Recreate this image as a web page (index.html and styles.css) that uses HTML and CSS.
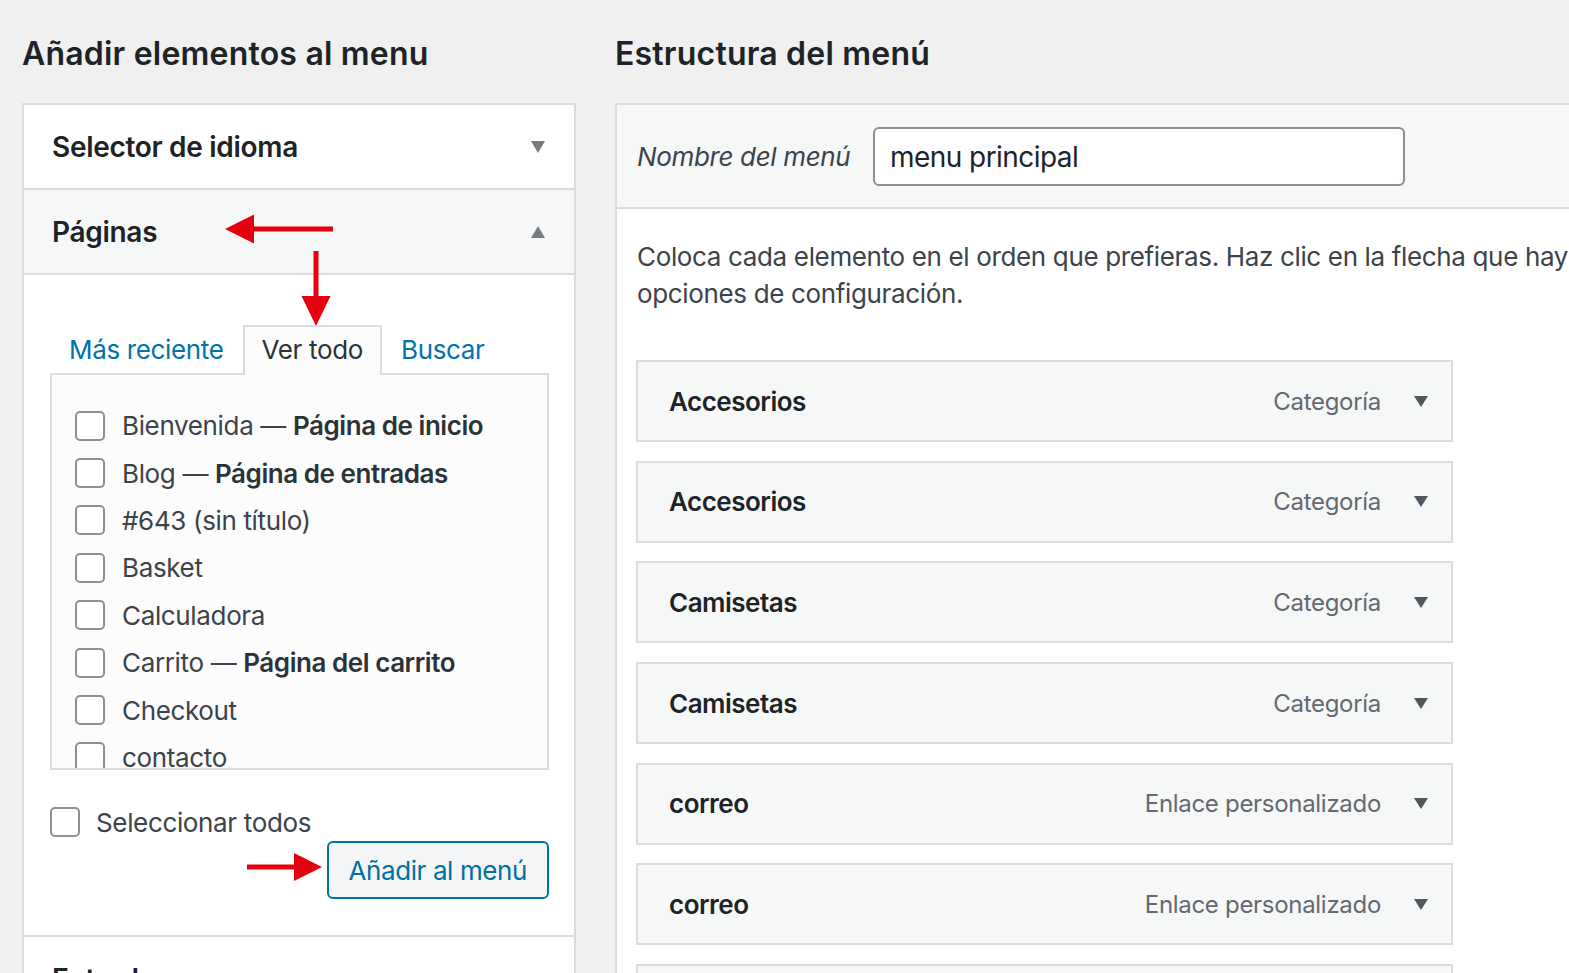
FILE: index.html
```html
<!DOCTYPE html>
<html lang="es">
<head>
<meta charset="utf-8">
<title>Menús</title>
<link rel="stylesheet" href="styles.css">
</head>
<body>
<div class="page">
  <section class="col col-left">
    <h2 class="col-title">Añadir elementos al menu</h2>
    <div class="accordion">
      <div class="acc-section">
        <h3 class="acc-title">Selector de idioma <span class="tri tri-down"></span></h3>
      </div>
      <div class="acc-section open">
        <h3 class="acc-title">Páginas <span class="tri tri-up"></span></h3>
        <div class="acc-content">
          <ul class="tabs">
            <li class="tab"><a class="tab-link">Más reciente</a></li>
            <li class="tab active">Ver todo</li>
            <li class="tab"><a class="tab-link">Buscar</a></li>
          </ul>
          <div class="tabs-panel">
            <ul class="checklist">
              <li><span class="cb"></span><span>Bienvenida — <b>Página de inicio</b></span></li>
              <li><span class="cb"></span><span>Blog — <b>Página de entradas</b></span></li>
              <li><span class="cb"></span><span>#643 (sin título)</span></li>
              <li><span class="cb"></span><span>Basket</span></li>
              <li><span class="cb"></span><span>Calculadora</span></li>
              <li><span class="cb"></span><span>Carrito — <b>Página del carrito</b></span></li>
              <li><span class="cb"></span><span>Checkout</span></li>
              <li><span class="cb"></span><span>contacto</span></li>
            </ul>
          </div>
          <label class="select-all"><span class="cb"></span><span>Seleccionar todos</span></label>
          <div class="actions"><button class="btn" type="button">Añadir al menú</button></div>
        </div>
      </div>
      <div class="acc-section">
        <h3 class="acc-title">Entradas <span class="tri tri-down"></span></h3>
      </div>
    </div>
  </section>

  <section class="col col-right">
    <h2 class="col-title">Estructura del menú</h2>
    <div class="menu-panel">
      <div class="menu-header">
        <label class="menu-name-label">Nombre del menú</label>
        <div class="menu-name-input">menu principal</div>
      </div>
      <div class="menu-body">
        <p class="instructions">Coloca cada elemento en el orden que prefieras. Haz clic en la flecha que hay a la derecha del elemento para mostrar más<br>opciones de configuración.</p>
        <ul class="menu-list">
          <li class="menu-item"><span class="item-title">Accesorios</span><span class="item-type">Categoría</span><span class="tri tri-item"></span></li>
          <li class="menu-item"><span class="item-title">Accesorios</span><span class="item-type">Categoría</span><span class="tri tri-item"></span></li>
          <li class="menu-item"><span class="item-title">Camisetas</span><span class="item-type">Categoría</span><span class="tri tri-item"></span></li>
          <li class="menu-item"><span class="item-title">Camisetas</span><span class="item-type">Categoría</span><span class="tri tri-item"></span></li>
          <li class="menu-item"><span class="item-title">correo</span><span class="item-type">Enlace personalizado</span><span class="tri tri-item"></span></li>
          <li class="menu-item"><span class="item-title">correo</span><span class="item-type">Enlace personalizado</span><span class="tri tri-item"></span></li>
          <li class="menu-item"><span class="item-title">Inicio</span><span class="item-type">Página</span><span class="tri tri-item"></span></li>
        </ul>
      </div>
    </div>
  </section>
</div>

<svg class="annotations" width="1569" height="973" viewBox="0 0 1569 973" aria-hidden="true">
  <g fill="#e5000f" stroke="none">
    <rect x="250" y="226.5" width="83" height="5"/>
    <polygon points="225,229 254,214.5 254,243.5"/>
    <rect x="313.5" y="251" width="5" height="48"/>
    <polygon points="316,326 301.5,296 330.5,296"/>
    <rect x="247" y="864.5" width="50" height="5"/>
    <polygon points="322,867 294,853 294,881"/>
  </g>
</svg>
</body>
</html>
```

FILE: styles.css
```css
* { box-sizing: border-box; }

html, body {
  margin: 0;
  padding: 0;
}

body {
  position: relative;
  width: 1569px;
  height: 973px;
  overflow: hidden;
  background: #f0f0f1;
  font-family: Inter, "Noto Sans", sans-serif;
  color: #3c434a;
  letter-spacing: -0.35px;
}

.page {
  display: flex;
  gap: 39px;
  padding: 34px 0 0 22px;
}

.col-left { width: 554px; flex: none; }
.col-right { width: 2100px; flex: none; }

.col-title {
  margin: 0 0 29px;
  font-size: 32px;
  line-height: 40px;
  font-weight: 600;
  color: #1d2327;
  letter-spacing: 0.2px;
}

/* Accordion */
.accordion {
  border: 2px solid #dcdcde;
  background: #fff;
}

.acc-section + .acc-section { border-top: 2px solid #dcdcde; }

.acc-title {
  margin: 0;
  height: 83px;
  display: flex;
  align-items: center;
  justify-content: space-between;
  padding: 0 29px 0 28px;
  font-size: 28px;
  font-weight: 600;
  color: #1d2327;
  letter-spacing: -0.3px;
}

.open .acc-title {
  background: #f6f7f7;
  border-bottom: 2px solid #dcdcde;
  height: 85px;
}

.tri {
  display: block;
  width: 0;
  height: 0;
  border-left: 7.5px solid transparent;
  border-right: 7.5px solid transparent;
}
.tri-down { border-top: 12px solid #787c82; }
.tri-up { border-bottom: 12px solid #787c82; }
.tri-item {
  border-top: 11px solid #50575e;
  flex: none;
}

.acc-content {
  padding: 50px 25px 36px 26px;
}

/* Tabs */
.tabs {
  list-style: none;
  margin: 0 0 -2px;
  padding: 0;
  display: flex;
  position: relative;
  z-index: 1;
}

.tab {
  padding: 0 17px 2px;
  border: 2px solid transparent;
  border-bottom: none;
  font-size: 26px;
  line-height: 46px;
  color: #1d2327;
}

.tab.active {
  border-color: #dcdcde;
  background: #fcfcfd;
  color: #2c3338;
}

.tab-link { color: #0073aa; }

.tabs-panel {
  height: 397px;
  overflow: hidden;
  border: 2px solid #dcdcde;
  background: #fcfcfd;
  padding: 27px 0 0 23px;
}

.checklist {
  list-style: none;
  margin: 0;
  padding: 0;
}

.checklist li {
  height: 47.4px;
  display: flex;
  align-items: center;
  gap: 17px;
  font-size: 26px;
  color: #3c434a;
  white-space: nowrap;
}

.checklist b { font-weight: 600; color: #2c3338; letter-spacing: -0.45px; }

.cb {
  flex: none;
  width: 30px;
  height: 30px;
  border: 2px solid #8c8f94;
  border-radius: 5px;
  background: #fff;
}

.select-all {
  margin-top: 37px;
  display: flex;
  align-items: center;
  gap: 16px;
  height: 30px;
  font-size: 26px;
  color: #3c434a;
}

.actions {
  display: flex;
  justify-content: flex-end;
  margin-top: 4px;
}

.btn {
  height: 58px;
  padding: 0 20px;
  border: 2px solid #0071a1;
  border-radius: 6px;
  background: #f3f5f6;
  color: #0071a1;
  font-family: inherit;
  font-size: 26px;
  letter-spacing: -0.4px;
}

/* Menu structure */
.menu-panel {
  border: 2px solid #dcdcde;
  background: #fff;
  height: 1000px;
}

.menu-header {
  display: flex;
  align-items: center;
  padding: 22px 20px 21px;
  background: #f6f7f7;
  border-bottom: 2px solid #dcdcde;
}

.menu-name-label {
  width: 236px;
  flex: none;
  font-size: 26px;
  font-style: italic;
  color: #3c434a;
}

.menu-name-input {
  width: 532px;
  height: 59px;
  display: flex;
  align-items: center;
  padding: 0 15px;
  border: 2px solid #8c8f94;
  border-radius: 6px;
  background: #fff;
  font-size: 28px;
  color: #1d2327;
  letter-spacing: -0.55px;
}

.menu-body {
  padding: 29px 20px 0;
}

.instructions {
  margin: 0;
  font-size: 26px;
  line-height: 37px;
  color: #3c434a;
  white-space: nowrap;
}

.menu-list {
  list-style: none;
  margin: 48px 0 0;
  padding: 0;
}

.menu-item {
  width: 817px;
  height: 82px;
  margin: 0 0 18.7px -1px;
  display: flex;
  align-items: center;
  padding: 0 23px 0 31px;
  border: 2px solid #dcdcde;
  background: #f6f7f7;
}

.item-title {
  flex: 1;
  font-size: 26px;
  font-weight: 600;
  color: #1d2327;
  letter-spacing: -0.5px;
}

.item-type {
  margin-right: 33px;
  font-size: 24px;
  color: #646970;
  letter-spacing: -0.3px;
}

.annotations {
  position: absolute;
  left: 0;
  top: 0;
  pointer-events: none;
}
```
